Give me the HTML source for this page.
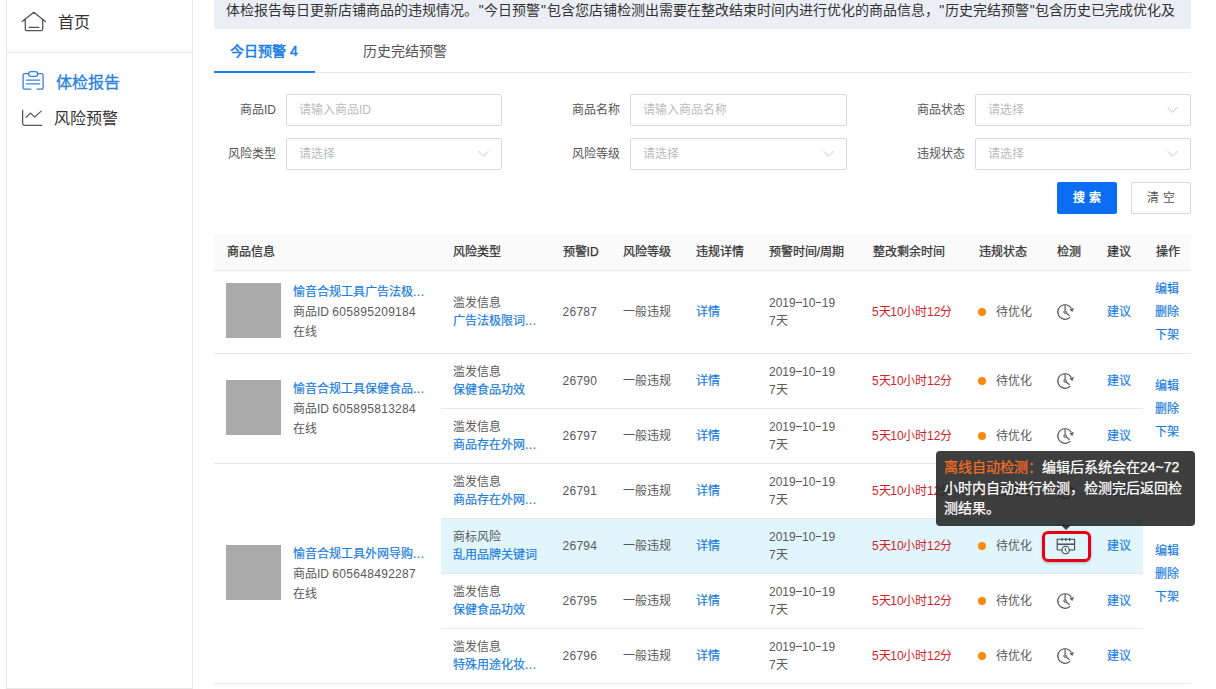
<!DOCTYPE html><html lang='zh-CN'><head><meta charset='utf-8'><style>
*{box-sizing:border-box;margin:0;padding:0}
html,body{width:1216px;height:689px;overflow:hidden;background:#fff}
body{position:relative;font-family:"Liberation Sans",sans-serif;font-size:12px;color:#595959;}
.a{position:absolute;white-space:nowrap}
.lk{color:#1b7ddf;-webkit-text-stroke:0.2px #1b7ddf}
.hl{position:absolute;height:1px;background:#e8e8e8}
.lab{position:absolute;width:72px;text-align:right;color:#555;line-height:32px}
.inp{position:absolute;height:32px;border:1px solid #d9d9d9;border-radius:2px;color:#bbb;padding-left:12px;line-height:30px}
.chev{position:absolute;right:12px;top:10.5px}
.th{position:absolute;top:234px;line-height:36px;color:#333;-webkit-text-stroke:0.25px #333}
.c2{position:absolute;line-height:18px}
.dsh{display:inline-block;width:5.8px;height:1.2px;background:#555;vertical-align:3.6px;margin:0 0.5px 0 0.1px}
.img{position:absolute;width:55px;height:55px;background:#aaa}
</style></head><body>
<div class='a' style='left:6px;top:-1px;width:187px;height:690px;border:1px solid #e8e8e8'></div>
<div class='hl' style='left:6px;top:52px;width:187px'></div>
<svg class='a' style='left:0;top:0' width='60' height='60' viewBox='0 0 60 60'>
<path d='M22.2 21.5 L33.8 12.3 L45.3 21.5 M25.3 19.2 V29.2 Q25.3 30.7 26.8 30.7 H41.2 Q42.7 30.7 42.7 29.2 V19.2 M29.2 27.4 H38.8' fill='none' stroke='#555' stroke-width='1.3' stroke-linecap='round' stroke-linejoin='round'/></svg>
<div class='a' style='left:58px;top:12px;font-size:16px;line-height:22px;color:#333'>首页</div>
<svg class='a' style='left:0;top:60px' width='60' height='40' viewBox='0 60 60 40'>
<path d='M30.8 89.2 H25 Q23.1 89.2 23.1 87.3 V75.6 Q23.1 73.7 25 73.7 H28.4 M37.9 73.7 H41.3 Q43.1 73.7 43.1 75.6 V87.3 Q43.1 89.2 41.3 89.2 H37.1' fill='none' stroke='#3a80dc' stroke-width='1.3' stroke-linecap='round'/>
<rect x='28.6' y='71.6' width='9.2' height='4.8' rx='2.4' fill='none' stroke='#3a80dc' stroke-width='1.3'/>
<path d='M26.4 80.1 H39.8 M26.4 83.8 H39.8' stroke='#3a80dc' stroke-width='1.2' stroke-linecap='round'/></svg>
<div class='a' style='left:56px;top:72px;font-size:16px;line-height:22px;color:#2a7fdc;-webkit-text-stroke:0.3px #2a7fdc'>体检报告</div>
<svg class='a' style='left:0;top:100px' width='60' height='32' viewBox='0 100 60 32'>
<path d='M22.6 110.2 V123.5 Q22.6 125.3 24.4 125.3 H41.8' fill='none' stroke='#555' stroke-width='1.3' stroke-linecap='round'/>
<path d='M26.2 117.4 L30.4 113.1 L34.7 117 L41.2 111.1' fill='none' stroke='#555' stroke-width='1.2' stroke-linecap='round' stroke-linejoin='miter'/></svg>
<div class='a' style='left:54px;top:108px;font-size:16px;line-height:22px;color:#333'>风险预警</div>
<div class='a' style='left:214px;top:-20px;width:977px;height:49px;background:#ebeff5;overflow:hidden'></div>
<div class='a' style='left:226px;top:-1px;width:960px;overflow:hidden;font-size:14px;line-height:22px;color:#333'>体检报告每日更新店铺商品的违规情况。<span style=padding-left:0.8px;padding-right:0.5px>"</span>今日预警<span style=padding-left:0.8px;padding-right:0.5px>"</span>包含您店铺检测出需要在整改结束时间内进行优化的商品信息，<span style=padding-left:0.8px;padding-right:0.5px>"</span>历史完结预警<span style=padding-left:0.8px;padding-right:0.5px>"</span>包含历史已完成优化及</div>
<div class='hl' style='left:214px;top:72px;width:977px'></div>
<div class='a' style='left:214px;top:71px;width:101px;height:2px;background:#1a7ee6'></div>
<div class='a' style='left:230px;top:40px;font-size:14px;line-height:22px;color:#1a7ee6;-webkit-text-stroke:0.5px #1a7ee6'>今日预警 4</div>
<div class='a' style='left:363px;top:40px;font-size:14px;line-height:22px;color:#555'>历史完结预警</div>
<div class='lab' style='left:204px;top:94px'>商品ID</div>
<div class='inp' style='left:286px;top:94px;width:216px'>请输入商品ID</div>
<div class='lab' style='left:204px;top:138px'>风险类型</div>
<div class='inp' style='left:286px;top:138px;width:216px'>请选择<svg class='chev' width='11' height='8' viewBox='0 0 11 8'><path d='M0.5 1 L5.5 6.5 L10.5 1' fill='none' stroke='#c8c8c8' stroke-width='1'/></svg></div>
<div class='lab' style='left:548px;top:94px'>商品名称</div>
<div class='inp' style='left:630px;top:94px;width:217px'>请输入商品名称</div>
<div class='lab' style='left:548px;top:138px'>风险等级</div>
<div class='inp' style='left:630px;top:138px;width:217px'>请选择<svg class='chev' width='11' height='8' viewBox='0 0 11 8'><path d='M0.5 1 L5.5 6.5 L10.5 1' fill='none' stroke='#c8c8c8' stroke-width='1'/></svg></div>
<div class='lab' style='left:893px;top:94px'>商品状态</div>
<div class='inp' style='left:975px;top:94px;width:216px'>请选择<svg class='chev' width='11' height='8' viewBox='0 0 11 8'><path d='M0.5 1 L5.5 6.5 L10.5 1' fill='none' stroke='#c8c8c8' stroke-width='1'/></svg></div>
<div class='lab' style='left:893px;top:138px'>违规状态</div>
<div class='inp' style='left:975px;top:138px;width:216px'>请选择<svg class='chev' width='11' height='8' viewBox='0 0 11 8'><path d='M0.5 1 L5.5 6.5 L10.5 1' fill='none' stroke='#c8c8c8' stroke-width='1'/></svg></div>
<div class='a' style='left:1057px;top:182px;width:60px;height:32px;background:#0b6df2;border-radius:2px;color:#fff;text-align:center;line-height:32px;font-weight:bold'>搜 索</div>
<div class='a' style='left:1131px;top:182px;width:60px;height:32px;border:1px solid #d9d9d9;border-radius:2px;color:#555;text-align:center;line-height:30px'>清 空</div>
<div class='a' style='left:214px;top:234px;width:977px;height:36px;background:#fafafa'></div>
<div class='hl' style='left:214px;top:270px;width:977px'></div>
<div class='th' style='left:226.6px'>商品信息</div>
<div class='th' style='left:453px'>风险类型</div>
<div class='th' style='left:562.6px'>预警ID</div>
<div class='th' style='left:623px'>风险等级</div>
<div class='th' style='left:696.3px'>违规详情</div>
<div class='th' style='left:768.8px'>预警时间/周期</div>
<div class='th' style='left:872.6px'>整改剩余时间</div>
<div class='th' style='left:978.8px'>违规状态</div>
<div class='th' style='left:1057px'>检测</div>
<div class='th' style='left:1107.4px'>建议</div>
<div class='th' style='left:1155.5px'>操作</div>
<div class='a' style='left:441px;top:518px;width:702px;height:55px;background:#e1f5fc'></div>
<div class='hl' style='left:214px;top:353px;width:977px'></div>
<div class='hl' style='left:214px;top:463px;width:977px'></div>
<div class='hl' style='left:214px;top:683px;width:977px'></div>
<div class='hl' style='left:441px;top:408px;width:702px'></div>
<div class='hl' style='left:441px;top:518px;width:702px'></div>
<div class='hl' style='left:441px;top:573px;width:702px'></div>
<div class='hl' style='left:441px;top:628px;width:702px'></div>
<div class='c2' style='left:453px;top:293.5px'>滥发信息<br><span class='lk'>广告法极限词<span style=letter-spacing:0.5px>...</span></span></div>
<div class='a' style='left:562.6px;top:301.5px;line-height:20px;letter-spacing:0.25px'>26787</div>
<div class='a' style='left:623px;top:301.5px;line-height:20px'>一般违规</div>
<div class='a lk' style='left:696.3px;top:301.5px;line-height:20px'>详情</div>
<div class='c2' style='left:769px;top:293.5px'>2019<i class=dsh></i>10<i class=dsh></i>19<br>7天</div>
<div class='a' style='left:872px;top:301.5px;line-height:20px;color:#cf1f2a;letter-spacing:-0.15px'>5天10小时12分</div>
<div class='a' style='left:978px;top:307.5px;width:8px;height:8px;border-radius:50%;background:#fa8a0c'></div>
<div class='a' style='left:996px;top:301.5px;line-height:20px'>待优化</div>
<svg class='a' style='left:1055.4px;top:301.8px' width='20' height='20' viewBox='0 0 20 20'>
<path d='M10 2.7 A7.3 7.3 0 1 0 15.3 15.1' fill='none' stroke='#555' stroke-width='1.15'/>
<path d='M10 2.7 A7.3 7.3 0 0 1 16.3 6.4' fill='none' stroke='#555' stroke-width='1.15'/>
<path d='M14.8 7.5 L18.6 6.2 L17.3 9.7 Z' fill='#555' stroke='#555' stroke-width='0.4' stroke-linejoin='round'/>
<path d='M10.1 2.9 V8.6 M11.1 11 L14.6 13.7' fill='none' stroke='#555' stroke-width='1.15'/>
<circle cx='10.1' cy='10' r='1.25' fill='none' stroke='#555' stroke-width='1.05'/></svg>
<div class='a lk' style='left:1107.4px;top:301.5px;line-height:20px'>建议</div>
<div class='c2' style='left:453px;top:362.5px'>滥发信息<br><span class='lk'>保健食品功效</span></div>
<div class='a' style='left:562.6px;top:370.5px;line-height:20px;letter-spacing:0.25px'>26790</div>
<div class='a' style='left:623px;top:370.5px;line-height:20px'>一般违规</div>
<div class='a lk' style='left:696.3px;top:370.5px;line-height:20px'>详情</div>
<div class='c2' style='left:769px;top:362.5px'>2019<i class=dsh></i>10<i class=dsh></i>19<br>7天</div>
<div class='a' style='left:872px;top:370.5px;line-height:20px;color:#cf1f2a;letter-spacing:-0.15px'>5天10小时12分</div>
<div class='a' style='left:978px;top:376.5px;width:8px;height:8px;border-radius:50%;background:#fa8a0c'></div>
<div class='a' style='left:996px;top:370.5px;line-height:20px'>待优化</div>
<svg class='a' style='left:1055.4px;top:370.8px' width='20' height='20' viewBox='0 0 20 20'>
<path d='M10 2.7 A7.3 7.3 0 1 0 15.3 15.1' fill='none' stroke='#555' stroke-width='1.15'/>
<path d='M10 2.7 A7.3 7.3 0 0 1 16.3 6.4' fill='none' stroke='#555' stroke-width='1.15'/>
<path d='M14.8 7.5 L18.6 6.2 L17.3 9.7 Z' fill='#555' stroke='#555' stroke-width='0.4' stroke-linejoin='round'/>
<path d='M10.1 2.9 V8.6 M11.1 11 L14.6 13.7' fill='none' stroke='#555' stroke-width='1.15'/>
<circle cx='10.1' cy='10' r='1.25' fill='none' stroke='#555' stroke-width='1.05'/></svg>
<div class='a lk' style='left:1107.4px;top:370.5px;line-height:20px'>建议</div>
<div class='c2' style='left:453px;top:417.5px'>滥发信息<br><span class='lk'>商品存在外网<span style=letter-spacing:0.5px>...</span></span></div>
<div class='a' style='left:562.6px;top:425.5px;line-height:20px;letter-spacing:0.25px'>26797</div>
<div class='a' style='left:623px;top:425.5px;line-height:20px'>一般违规</div>
<div class='a lk' style='left:696.3px;top:425.5px;line-height:20px'>详情</div>
<div class='c2' style='left:769px;top:417.5px'>2019<i class=dsh></i>10<i class=dsh></i>19<br>7天</div>
<div class='a' style='left:872px;top:425.5px;line-height:20px;color:#cf1f2a;letter-spacing:-0.15px'>5天10小时12分</div>
<div class='a' style='left:978px;top:431.5px;width:8px;height:8px;border-radius:50%;background:#fa8a0c'></div>
<div class='a' style='left:996px;top:425.5px;line-height:20px'>待优化</div>
<svg class='a' style='left:1055.4px;top:425.8px' width='20' height='20' viewBox='0 0 20 20'>
<path d='M10 2.7 A7.3 7.3 0 1 0 15.3 15.1' fill='none' stroke='#555' stroke-width='1.15'/>
<path d='M10 2.7 A7.3 7.3 0 0 1 16.3 6.4' fill='none' stroke='#555' stroke-width='1.15'/>
<path d='M14.8 7.5 L18.6 6.2 L17.3 9.7 Z' fill='#555' stroke='#555' stroke-width='0.4' stroke-linejoin='round'/>
<path d='M10.1 2.9 V8.6 M11.1 11 L14.6 13.7' fill='none' stroke='#555' stroke-width='1.15'/>
<circle cx='10.1' cy='10' r='1.25' fill='none' stroke='#555' stroke-width='1.05'/></svg>
<div class='a lk' style='left:1107.4px;top:425.5px;line-height:20px'>建议</div>
<div class='c2' style='left:453px;top:472.5px'>滥发信息<br><span class='lk'>商品存在外网<span style=letter-spacing:0.5px>...</span></span></div>
<div class='a' style='left:562.6px;top:480.5px;line-height:20px;letter-spacing:0.25px'>26791</div>
<div class='a' style='left:623px;top:480.5px;line-height:20px'>一般违规</div>
<div class='a lk' style='left:696.3px;top:480.5px;line-height:20px'>详情</div>
<div class='c2' style='left:769px;top:472.5px'>2019<i class=dsh></i>10<i class=dsh></i>19<br>7天</div>
<div class='a' style='left:872px;top:480.5px;line-height:20px;color:#cf1f2a;letter-spacing:-0.15px'>5天10小时12分</div>
<div class='a' style='left:978px;top:486.5px;width:8px;height:8px;border-radius:50%;background:#fa8a0c'></div>
<div class='a' style='left:996px;top:480.5px;line-height:20px'>待优化</div>
<svg class='a' style='left:1055.4px;top:480.8px' width='20' height='20' viewBox='0 0 20 20'>
<path d='M10 2.7 A7.3 7.3 0 1 0 15.3 15.1' fill='none' stroke='#555' stroke-width='1.15'/>
<path d='M10 2.7 A7.3 7.3 0 0 1 16.3 6.4' fill='none' stroke='#555' stroke-width='1.15'/>
<path d='M14.8 7.5 L18.6 6.2 L17.3 9.7 Z' fill='#555' stroke='#555' stroke-width='0.4' stroke-linejoin='round'/>
<path d='M10.1 2.9 V8.6 M11.1 11 L14.6 13.7' fill='none' stroke='#555' stroke-width='1.15'/>
<circle cx='10.1' cy='10' r='1.25' fill='none' stroke='#555' stroke-width='1.05'/></svg>
<div class='a lk' style='left:1107.4px;top:480.5px;line-height:20px'>建议</div>
<div class='c2' style='left:453px;top:527.5px'>商标风险<br><span class='lk'>乱用品牌关键词</span></div>
<div class='a' style='left:562.6px;top:535.5px;line-height:20px;letter-spacing:0.25px'>26794</div>
<div class='a' style='left:623px;top:535.5px;line-height:20px'>一般违规</div>
<div class='a lk' style='left:696.3px;top:535.5px;line-height:20px'>详情</div>
<div class='c2' style='left:769px;top:527.5px'>2019<i class=dsh></i>10<i class=dsh></i>19<br>7天</div>
<div class='a' style='left:872px;top:535.5px;line-height:20px;color:#cf1f2a;letter-spacing:-0.15px'>5天10小时12分</div>
<div class='a' style='left:978px;top:541.5px;width:8px;height:8px;border-radius:50%;background:#fa8a0c'></div>
<div class='a' style='left:996px;top:535.5px;line-height:20px'>待优化</div>
<svg class='a' style='left:1055px;top:535px' width='22' height='20' viewBox='0 0 22 20'>
<path d='M2.2 15 V4.3 H19.6 V15 M2.2 15 H7 M13.5 15 H19.6' fill='none' stroke='#444' stroke-width='1.1'/>
<path d='M2.2 9.2 H19.6' stroke='#444' stroke-width='1.4'/>
<path d='M7 3 V6 M10.8 3 V6 M14.5 3 V6' stroke='#444' stroke-width='1.1'/>
<circle cx='10.6' cy='15' r='3.7' fill='#e1f5fc' stroke='#444' stroke-width='1.1'/>
<path d='M10.3 13 V15.2 L11.8 16.5' fill='none' stroke='#444' stroke-width='1'/></svg>
<div class='a lk' style='left:1107.4px;top:535.5px;line-height:20px'>建议</div>
<div class='c2' style='left:453px;top:582.5px'>滥发信息<br><span class='lk'>保健食品功效</span></div>
<div class='a' style='left:562.6px;top:590.5px;line-height:20px;letter-spacing:0.25px'>26795</div>
<div class='a' style='left:623px;top:590.5px;line-height:20px'>一般违规</div>
<div class='a lk' style='left:696.3px;top:590.5px;line-height:20px'>详情</div>
<div class='c2' style='left:769px;top:582.5px'>2019<i class=dsh></i>10<i class=dsh></i>19<br>7天</div>
<div class='a' style='left:872px;top:590.5px;line-height:20px;color:#cf1f2a;letter-spacing:-0.15px'>5天10小时12分</div>
<div class='a' style='left:978px;top:596.5px;width:8px;height:8px;border-radius:50%;background:#fa8a0c'></div>
<div class='a' style='left:996px;top:590.5px;line-height:20px'>待优化</div>
<svg class='a' style='left:1055.4px;top:590.8px' width='20' height='20' viewBox='0 0 20 20'>
<path d='M10 2.7 A7.3 7.3 0 1 0 15.3 15.1' fill='none' stroke='#555' stroke-width='1.15'/>
<path d='M10 2.7 A7.3 7.3 0 0 1 16.3 6.4' fill='none' stroke='#555' stroke-width='1.15'/>
<path d='M14.8 7.5 L18.6 6.2 L17.3 9.7 Z' fill='#555' stroke='#555' stroke-width='0.4' stroke-linejoin='round'/>
<path d='M10.1 2.9 V8.6 M11.1 11 L14.6 13.7' fill='none' stroke='#555' stroke-width='1.15'/>
<circle cx='10.1' cy='10' r='1.25' fill='none' stroke='#555' stroke-width='1.05'/></svg>
<div class='a lk' style='left:1107.4px;top:590.5px;line-height:20px'>建议</div>
<div class='c2' style='left:453px;top:637.5px'>滥发信息<br><span class='lk'>特殊用途化妆<span style=letter-spacing:0.5px>...</span></span></div>
<div class='a' style='left:562.6px;top:645.5px;line-height:20px;letter-spacing:0.25px'>26796</div>
<div class='a' style='left:623px;top:645.5px;line-height:20px'>一般违规</div>
<div class='a lk' style='left:696.3px;top:645.5px;line-height:20px'>详情</div>
<div class='c2' style='left:769px;top:637.5px'>2019<i class=dsh></i>10<i class=dsh></i>19<br>7天</div>
<div class='a' style='left:872px;top:645.5px;line-height:20px;color:#cf1f2a;letter-spacing:-0.15px'>5天10小时12分</div>
<div class='a' style='left:978px;top:651.5px;width:8px;height:8px;border-radius:50%;background:#fa8a0c'></div>
<div class='a' style='left:996px;top:645.5px;line-height:20px'>待优化</div>
<svg class='a' style='left:1055.4px;top:645.8px' width='20' height='20' viewBox='0 0 20 20'>
<path d='M10 2.7 A7.3 7.3 0 1 0 15.3 15.1' fill='none' stroke='#555' stroke-width='1.15'/>
<path d='M10 2.7 A7.3 7.3 0 0 1 16.3 6.4' fill='none' stroke='#555' stroke-width='1.15'/>
<path d='M14.8 7.5 L18.6 6.2 L17.3 9.7 Z' fill='#555' stroke='#555' stroke-width='0.4' stroke-linejoin='round'/>
<path d='M10.1 2.9 V8.6 M11.1 11 L14.6 13.7' fill='none' stroke='#555' stroke-width='1.15'/>
<circle cx='10.1' cy='10' r='1.25' fill='none' stroke='#555' stroke-width='1.05'/></svg>
<div class='a lk' style='left:1107.4px;top:645.5px;line-height:20px'>建议</div>
<div class='img' style='left:226px;top:283.0px'></div>
<div class='a' style='left:293px;top:282.0px;line-height:20px'><span class='lk'>愉音合规工具广告法极<span style=letter-spacing:0.5px>...</span></span><br>商品ID <span style=letter-spacing:0.3px>605895209184</span><br>在线</div>
<div class='a lk' style='left:1154.5px;top:278.0px;line-height:23px'>编辑<br>删除<br>下架</div>
<div class='img' style='left:226px;top:379.5px'></div>
<div class='a' style='left:293px;top:378.5px;line-height:20px'><span class='lk'>愉音合规工具保健食品<span style=letter-spacing:0.5px>...</span></span><br>商品ID <span style=letter-spacing:0.3px>605895813284</span><br>在线</div>
<div class='a lk' style='left:1154.5px;top:374.5px;line-height:23px'>编辑<br>删除<br>下架</div>
<div class='img' style='left:226px;top:544.5px'></div>
<div class='a' style='left:293px;top:543.5px;line-height:20px'><span class='lk'>愉音合规工具外网导购<span style=letter-spacing:0.5px>...</span></span><br>商品ID <span style=letter-spacing:0.3px>605648492287</span><br>在线</div>
<div class='a lk' style='left:1154.5px;top:539.5px;line-height:23px'>编辑<br>删除<br>下架</div>
<div class='a' style='left:936px;top:451px;width:259px;height:75px;background:rgba(30,30,30,0.86);border-radius:4px;color:#fff;font-size:14px;line-height:20.5px;padding:6px 8px;white-space:normal;-webkit-text-stroke:0.25px #fff'><span style='color:#f46b22;-webkit-text-stroke:0.25px #f46b22'>离线自动检测：</span>编辑后系统会在24~72小时内自动进行检测，检测完后返回检测结果。</div>
<div class='a' style='left:1061px;top:525px;width:0;height:0;border-left:5px solid transparent;border-right:5px solid transparent;border-top:5px solid rgba(30,30,30,0.86)'></div>
<div class='a' style='left:1042px;top:531px;width:49px;height:31px;border:3px solid #e60012;border-radius:6px;box-shadow:0 1px 3px rgba(0,0,0,0.25)'></div>
</body></html>
